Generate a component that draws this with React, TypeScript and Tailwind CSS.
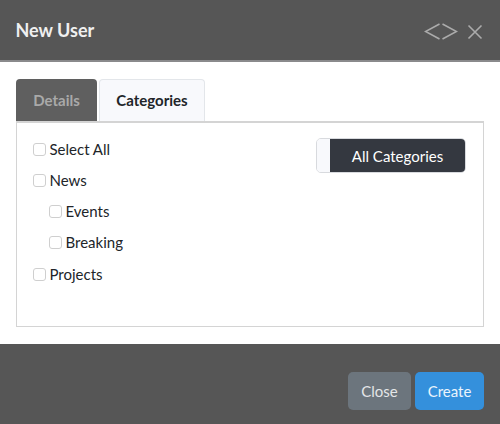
import React from 'react';

const Check = ({ label, child }: { label: string; child?: boolean }) => (
  <label className={`flex items-center gap-[3.5px] h-[31.25px] ${child ? 'pl-[16px]' : ''}`}>
    <span className="w-[13px] h-[13px] rounded-[3px] border border-[#cfcfcf] bg-white shrink-0" />
    <span className="text-[15px] leading-none text-[#212529]">{label}</span>
  </label>
);

export default function App() {
  return (
    <div className="w-[500px] h-[424px] flex flex-col bg-white overflow-hidden font-['Lato','Open_Sans',sans-serif]">
      <header className="h-[62px] bg-[#565656] border-b-2 border-[#8a8a8c] flex items-center justify-between pl-[15.5px] pr-[17px]">
        <h1 className="text-[18px] font-bold text-[#f0f0f0] leading-none mb-[1px]">New User</h1>
        <div className="flex items-center gap-[9px] mt-[3px] text-[#ababab]">
          <svg width="34" height="17" viewBox="0 0 34 17" fill="none" stroke="currentColor" strokeWidth="1.6">
            <path d="M15.5 1 L1.5 8.5 L15.5 16" />
            <path d="M18.5 1 L32.5 8.5 L18.5 16" />
          </svg>
          <svg width="16" height="16" viewBox="0 0 16 16" fill="none" stroke="currentColor" strokeWidth="1.6">
            <path d="M1.5 1.5 L14.5 14.5 M14.5 1.5 L1.5 14.5" />
          </svg>
        </div>
      </header>

      <main className="h-[282px] px-[16px] pt-[17px]">
        <div className="flex gap-[2px] h-[42px]">
          <div className="w-[81px] rounded-t-[4px] bg-[#5f5f5f] flex items-center justify-center text-[15px] font-bold text-[#a9a9a9]">
            Details
          </div>
          <div className="w-[106px] rounded-t-[4px] bg-[#f8f9fc] border border-b-0 border-[#e3e6ea] flex items-center justify-center text-[15px] font-bold text-[#212529]">
            Categories
          </div>
        </div>
        <section className="h-[206px] border border-t-2 border-[#d4d4d4] flex justify-between pl-[16px] pr-[17px] pt-[10.6px]">
          <div className="flex flex-col">
            <Check label="Select All" />
            <Check label="News" />
            <Check label="Events" child />
            <Check label="Breaking" child />
            <Check label="Projects" />
          </div>
          <div className="flex h-[35px] w-[150px] mt-[4.4px] rounded-[5px] border border-[#d8dade] overflow-hidden">
            <div className="w-[13px] bg-[#f8f9fc]" />
            <div className="flex-1 bg-[#343840] flex items-center justify-center pt-[2px] text-[15px] text-white">
              All Categories
            </div>
          </div>
        </section>
      </main>

      <footer className="flex-1 bg-[#565656] flex justify-end items-start gap-[4px] pt-[28px] pr-[16px]">
        <button className="w-[63px] h-[38px] rounded-[5px] bg-[#6c757d] text-[15px] text-[#e4e6e8]">Close</button>
        <button className="w-[69px] h-[38px] rounded-[5px] bg-[#3490dc] text-[15px] text-[#eaf4fc]">Create</button>
      </footer>
    </div>
  );
}
